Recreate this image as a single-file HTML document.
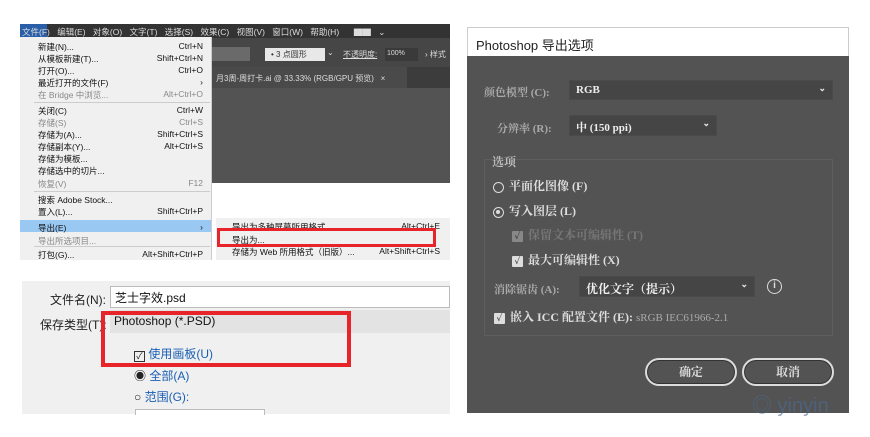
<!DOCTYPE html>
<html><head><meta charset="utf-8"><style>
*{margin:0;padding:0;box-sizing:border-box}
body{width:870px;height:437px;background:#fff;position:relative;overflow:hidden;font-family:"Liberation Sans","Noto Sans CJK SC",sans-serif}
.a{position:absolute;white-space:nowrap}
.mi{position:absolute;left:18px;font-size:8.5px;color:#111;white-space:nowrap}
.mk{position:absolute;right:8px;font-size:8.5px;color:#111}
.dis{color:#888}
.d{color:#ddd;font-family:"Liberation Serif","Noto Serif CJK SC",serif;font-weight:bold}
.sel{position:absolute;background:#454545;border:1px solid #4a4a4a;color:#eee;font-size:11px;font-weight:bold;font-family:"Liberation Serif","Noto Serif CJK SC",serif;padding:3px 6px}
.chev{position:absolute;right:6px;top:2px;font-size:9px}
.cb{display:inline-block;width:11px;height:11px;background:#ddd;color:#333;font-size:9px;line-height:11px;text-align:center;vertical-align:middle;margin-right:5px;border-radius:1px}
.rd{display:inline-block;width:11px;height:11px;border:1.5px solid #ddd;border-radius:50%;vertical-align:middle;margin-right:5px;position:relative}
.rd.on::after{content:"";position:absolute;left:2px;top:2px;width:4px;height:4px;border-radius:50%;background:#ddd}
</style></head><body>
<!-- top-left panel -->
<div class="a" style="left:20px;top:24px;width:430px;height:14px;background:#333"></div>
<div class="a" style="left:20px;top:24px;width:27px;height:14px;background:#2a5fa8"></div>
<div class="a" style="left:22px;top:26px;font-size:8.5px;color:#ddd;word-spacing:5px">文件(F) 编辑(E) 对象(O) 文字(T) 选择(S) 效果(C) 视图(V) 窗口(W) 帮助(H) &nbsp;▇▇ ⌄</div>
<div class="a" style="left:212px;top:38px;width:238px;height:29px;background:#464646"></div>
<div class="a" style="left:212px;top:47px;width:38px;height:14px;background:#6a6a6a"></div>
<div class="a" style="left:265px;top:48px;width:60px;height:13px;background:#e8e8e8;font-size:8px;color:#333;padding:1px 6px">• 3 点圆形</div>
<div class="a" style="left:327px;top:48px;font-size:8px;color:#ddd">⌄</div>
<div class="a" style="left:343px;top:49px;font-size:8px;color:#ddd;text-decoration:underline">不透明度:</div>
<div class="a" style="left:385px;top:48px;width:33px;height:13px;background:#3a3a3a;font-size:7px;color:#ddd;padding:2px">100%</div>
<div class="a" style="left:425px;top:49px;font-size:8px;color:#ddd">› 样式</div>
<div class="a" style="left:212px;top:67px;width:238px;height:21px;background:#3c3c3c"></div>
<div class="a" style="left:212px;top:67px;width:195px;height:21px;background:#4a4a4a;font-size:8px;color:#ddd;padding:6px 4px">月3周-周打卡.ai @ 33.33% (RGB/GPU 预览) &nbsp;&nbsp;×</div>
<div class="a" style="left:212px;top:88px;width:238px;height:95px;background:#535353"></div>
<div class="a" style="left:20px;top:37px;width:192px;height:223px;background:#f0f0f0;border-right:1px solid #ccc">
<div class="mi" style="top:4px">新建(N)...</div><div class="mk" style="top:4px">Ctrl+N</div>
<div class="mi" style="top:16px">从模板新建(T)...</div><div class="mk" style="top:16px">Shift+Ctrl+N</div>
<div class="mi" style="top:28px">打开(O)...</div><div class="mk" style="top:28px">Ctrl+O</div>
<div class="mi" style="top:40px">最近打开的文件(F)</div><div class="mk" style="top:40px">›</div>
<div class="mi dis" style="top:52px">在 Bridge 中浏览...</div><div class="mk dis" style="top:52px">Alt+Ctrl+O</div>
<div class="a" style="left:14px;top:65px;width:176px;border-top:1px solid #ccc"></div>
<div class="mi" style="top:68px">关闭(C)</div><div class="mk" style="top:68px">Ctrl+W</div>
<div class="mi dis" style="top:80px">存储(S)</div><div class="mk dis" style="top:80px">Ctrl+S</div>
<div class="mi" style="top:92px">存储为(A)...</div><div class="mk" style="top:92px">Shift+Ctrl+S</div>
<div class="mi" style="top:104px">存储副本(Y)...</div><div class="mk" style="top:104px">Alt+Ctrl+S</div>
<div class="mi" style="top:116px">存储为模板...</div>
<div class="mi" style="top:128px">存储选中的切片...</div>
<div class="mi dis" style="top:141px">恢复(V)</div><div class="mk dis" style="top:141px">F12</div>
<div class="a" style="left:14px;top:154px;width:176px;border-top:1px solid #ccc"></div>
<div class="mi" style="top:157px">搜索 Adobe Stock...</div>
<div class="mi" style="top:169px">置入(L)...</div><div class="mk" style="top:169px">Shift+Ctrl+P</div>
<div class="a" style="left:0;top:183px;width:191px;height:12px;background:#99c8f2"></div>
<div class="mi" style="top:185px">导出(E)</div><div class="mk" style="top:185px">›</div>
<div class="mi dis" style="top:198px">导出所选项目...</div>
<div class="a" style="left:14px;top:209px;width:176px;border-top:1px solid #ccc"></div>
<div class="mi" style="top:212px">打包(G)...</div><div class="mk" style="top:212px">Alt+Shift+Ctrl+P</div>
</div>
<div class="a" style="left:216px;top:218px;width:234px;height:42px;background:#f0f0f0">
<div class="mi" style="left:16px;top:3px">导出为多种屏幕所用格式...</div><div class="mk" style="right:10px;top:3px">Alt+Ctrl+E</div>
<div class="mi" style="left:16px;top:16px">导出为...</div>
<div class="mi" style="left:16px;top:28px">存储为 Web 所用格式（旧版）...</div><div class="mk" style="right:10px;top:28px">Alt+Shift+Ctrl+S</div>
</div>
<div class="a" style="left:217px;top:228px;width:219px;height:19px;border:3px solid #e8242b"></div>
<!-- bottom-left -->
<div class="a" style="left:22px;top:281px;width:428px;height:133px;background:#f0f0f0"></div>
<div class="a" style="left:50px;top:291px;font-size:12px;color:#222">文件名(N):</div>
<div class="a" style="left:110px;top:286px;width:340px;height:22px;background:#fff;border:1px solid #bbb;font-size:12px;padding:2px 4px;color:#111">芝士字效.psd</div>
<div class="a" style="left:40px;top:316px;font-size:12px;color:#222">保存类型(T):</div>
<div class="a" style="left:110px;top:310px;width:340px;height:23px;background:#e3e3e3;font-size:12px;padding:4px 4px;color:#111">Photoshop (*.PSD)</div>
<div class="a" style="left:134px;top:345px;font-size:12px;color:#1a5fb4"><span style="display:inline-block;width:11px;height:11px;border:1px solid #333;font-size:9px;line-height:9px;color:#222;text-align:center;vertical-align:-1px">✓</span> 使用画板(U)</div>
<div class="a" style="left:134px;top:367px;font-size:12px;color:#1a5fb4"><span style="color:#222">◉</span> 全部(A)</div>
<div class="a" style="left:134px;top:388px;font-size:12px;color:#1a5fb4"><span style="color:#222">○</span> 范围(G):</div>
<div class="a" style="left:135px;top:409px;width:130px;height:6px;border:1px solid #bbb;border-bottom:none;background:#fff"></div>
<div class="a" style="left:101px;top:311px;width:250px;height:56px;border:4px solid #e8242b"></div>
<!-- right dialog -->
<div class="a" style="left:467px;top:27px;width:382px;height:29px;background:#fff;border:1px solid #ccc;border-bottom:none;font-size:13px;color:#222;padding:7px 8px">Photoshop 导出选项</div>
<div class="a" style="left:467px;top:56px;width:382px;height:357px;background:#535353"></div>
<div class="a d" style="left:484px;top:84px;font-size:11px;color:#aaa">颜色模型 (C):</div>
<div class="sel" style="left:569px;top:80px;width:264px;height:20px">RGB<span class="chev">⌄</span></div>
<div class="a d" style="left:497px;top:120px;font-size:11px;color:#aaa">分辨率 (R):</div>
<div class="sel" style="left:569px;top:115px;width:148px;height:21px">中 (150 ppi)<span class="chev">⌄</span></div>
<div class="a" style="left:484px;top:159px;width:349px;height:177px;border:1px solid #5e5e5e"></div>
<div class="a d" style="left:492px;top:153px;font-size:12px;color:#bbb">选项</div>
<div class="a d" style="left:493px;top:177px;font-size:12px"><span class="rd"></span>平面化图像 (F)</div>
<div class="a d" style="left:493px;top:202px;font-size:12px"><span class="rd on"></span>写入图层 (L)</div>
<div class="a d" style="left:512px;top:226px;font-size:12px;color:#777"><span class="cb" style="background:#888">✓</span>保留文本可编辑性 (T)</div>
<div class="a d" style="left:512px;top:251px;font-size:12px"><span class="cb">✓</span>最大可编辑性 (X)</div>
<div class="a d" style="left:494px;top:281px;font-size:11px;color:#aaa">消除锯齿 (A):</div>
<div class="sel" style="left:579px;top:276px;width:176px;height:21px;font-size:12px">优化文字（提示）<span class="chev">⌄</span></div>
<div class="a" style="left:767px;top:279px;width:15px;height:15px;border:1.5px solid #ddd;border-radius:50%;color:#ddd;font-size:10px;text-align:center;line-height:12px;font-weight:bold">i</div>
<div class="a d" style="left:494px;top:308px;font-size:12px"><span class="cb">✓</span>嵌入 ICC 配置文件 (E): <span style="color:#aaa;font-weight:normal;font-size:11px">sRGB IEC61966-2.1</span></div>
<div class="a d" style="left:645px;top:358px;width:92px;height:28px;border:2px solid #ddd;border-radius:14px;text-align:center;line-height:24px;font-size:12px;box-shadow:0 0 0 1px #333 inset">确定</div>
<div class="a d" style="left:742px;top:358px;width:92px;height:28px;border:2px solid #ddd;border-radius:14px;text-align:center;line-height:24px;font-size:12px;box-shadow:0 0 0 1px #333 inset">取消</div>
<div class="a" style="left:752px;top:389px;font-size:20px;color:#4a6d95;opacity:.6">◎ yinyin</div>
</body></html>
